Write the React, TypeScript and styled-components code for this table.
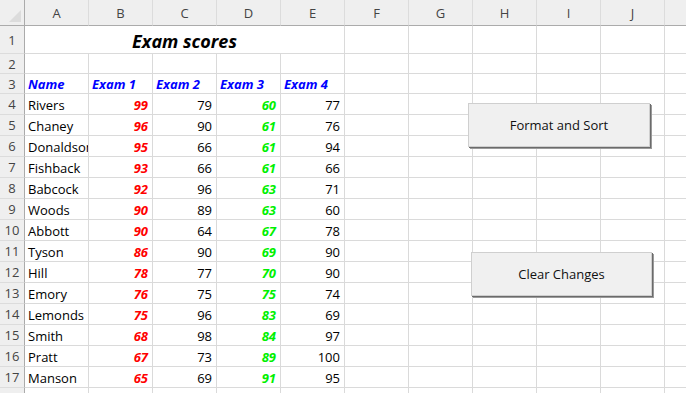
import React from 'react'
import styled, { createGlobalStyle } from 'styled-components'

const Global = createGlobalStyle`
	html, body {
		margin: 0;
		padding: 0;
		background: #fff;
		overflow: hidden;
	}
	body {
		font-family: "Open Sans", "Liberation Sans", sans-serif;
	}
`

const Sheet = styled.div`
	position: relative;
	display: grid;
	grid-template-columns: 25px repeat(11, 64px);
	grid-template-rows: 26px 28px 20px 20px repeat(15, 21px);
	width: 686px;
	height: 393px;
	overflow: hidden;
	font-size: 13px;
	color: #000;
`

const Corner = styled.div`
	position: relative;
	background: #efefef;
	border-right: 1px solid #ababab;
	border-bottom: 1px solid #ababab;

	&::after {
		content: '';
		position: absolute;
		right: 3px;
		bottom: 3px;
		width: 12px;
		height: 12px;
		background: #dcdcdc;
		clip-path: polygon(100% 0, 100% 100%, 0 100%);
	}
`

const ColHead = styled.div`
	display: flex;
	align-items: center;
	justify-content: center;
	background: #efefef;
	border-right: 1px solid #dcdcdc;
	border-bottom: 1px solid #ababab;
	color: #444;
	font-size: 13px;
	padding-top: 1px;
`

const RowHead = styled.div`
	display: flex;
	align-items: center;
	justify-content: center;
	background: #efefef;
	border-right: 1px solid #ababab;
	border-bottom: 1px solid #dcdcdc;
	color: #444;
	font-size: 13px;
`

const Cell = styled.div<{ $align?: string; $color?: string; $strong?: boolean }>`
	display: flex;
	align-items: center;
	justify-content: ${(p) => (p.$align === 'right' ? 'flex-end' : 'flex-start')};
	padding: 1px 4px 0 3px;
	border-right: 1px solid #dadada;
	border-bottom: 1px solid #dadada;
	white-space: nowrap;
	overflow: hidden;
	color: ${(p) => p.$color || '#000'};
	font-weight: ${(p) => (p.$strong ? 700 : 400)};
	font-style: ${(p) => (p.$strong ? 'italic' : 'normal')};
	min-width: 0;
`

const TitleCell = styled.div`
	grid-column: span 5;
	display: flex;
	align-items: center;
	justify-content: center;
	border-right: 1px solid #dadada;
	border-bottom: 1px solid #dadada;
	font-size: 18px;
	font-weight: 700;
	font-style: italic;
	padding-top: 2px;
`

const SheetButton = styled.div<{ $left: number; $top: number; $width: number }>`
	position: absolute;
	left: ${(p) => p.$left}px;
	top: ${(p) => p.$top}px;
	width: ${(p) => p.$width}px;
	height: 44px;
	box-sizing: border-box;
	display: flex;
	align-items: center;
	justify-content: center;
	background: #f0f0f0;
	border: 1px solid #cfcfcf;
	box-shadow: 1px 1px 0 #6b6b6b, 2px 2px 0 #9a9a9a;
	font-size: 13px;
	color: #111;
	padding-bottom: 1px;
`

const cols = ['A', 'B', 'C', 'D', 'E', 'F', 'G', 'H', 'I', 'J', '']

const scores: [string, number, number, number, number][] = [
	['Rivers', 99, 79, 60, 77],
	['Chaney', 96, 90, 61, 76],
	['Donaldson', 95, 66, 61, 94],
	['Fishback', 93, 66, 61, 66],
	['Babcock', 92, 96, 63, 71],
	['Woods', 90, 89, 63, 60],
	['Abbott', 90, 64, 67, 78],
	['Tyson', 86, 90, 69, 90],
	['Hill', 78, 77, 70, 90],
	['Emory', 76, 75, 75, 74],
	['Lemonds', 75, 96, 83, 69],
	['Smith', 68, 98, 84, 97],
	['Pratt', 67, 73, 89, 100],
	['Manson', 65, 69, 91, 95],
]

const RED = '#ff0000'
const GREEN = '#00f000'
const BLUE = '#0000ff'

const blanks = (n: number, key: string) =>
	Array.from({ length: n }, (_, i) => <Cell key={key + i} />)

export default function App() {
	return (
		<>
			<Global />
			<Sheet>
				<Corner />
				{cols.map((c, i) => (
					<ColHead key={'h' + i}>{c}</ColHead>
				))}

				<RowHead>1</RowHead>
				<TitleCell>Exam scores</TitleCell>
				{blanks(6, 'r1')}

				<RowHead>2</RowHead>
				{blanks(11, 'r2')}

				<RowHead>3</RowHead>
				{['Name', 'Exam 1', 'Exam 2', 'Exam 3', 'Exam 4'].map((h) => (
					<Cell key={h} $color={BLUE} $strong>
						{h}
					</Cell>
				))}
				{blanks(6, 'r3')}

				{scores.map(([name, e1, e2, e3, e4], i) => (
					<React.Fragment key={name}>
						<RowHead>{i + 4}</RowHead>
						<Cell>{name}</Cell>
						<Cell $align="right" $color={RED} $strong>
							{e1}
						</Cell>
						<Cell $align="right">{e2}</Cell>
						<Cell $align="right" $color={GREEN} $strong>
							{e3}
						</Cell>
						<Cell $align="right">{e4}</Cell>
						{blanks(6, 'd' + i)}
					</React.Fragment>
				))}

				{/* row 18 is only a sliver at the bottom edge */}
				<RowHead />
				{blanks(11, 'r18')}

				<SheetButton $left={468} $top={103} $width={182}>
					Format and Sort
				</SheetButton>
				<SheetButton $left={471} $top={252} $width={181}>
					Clear Changes
				</SheetButton>
			</Sheet>
		</>
	)
}
